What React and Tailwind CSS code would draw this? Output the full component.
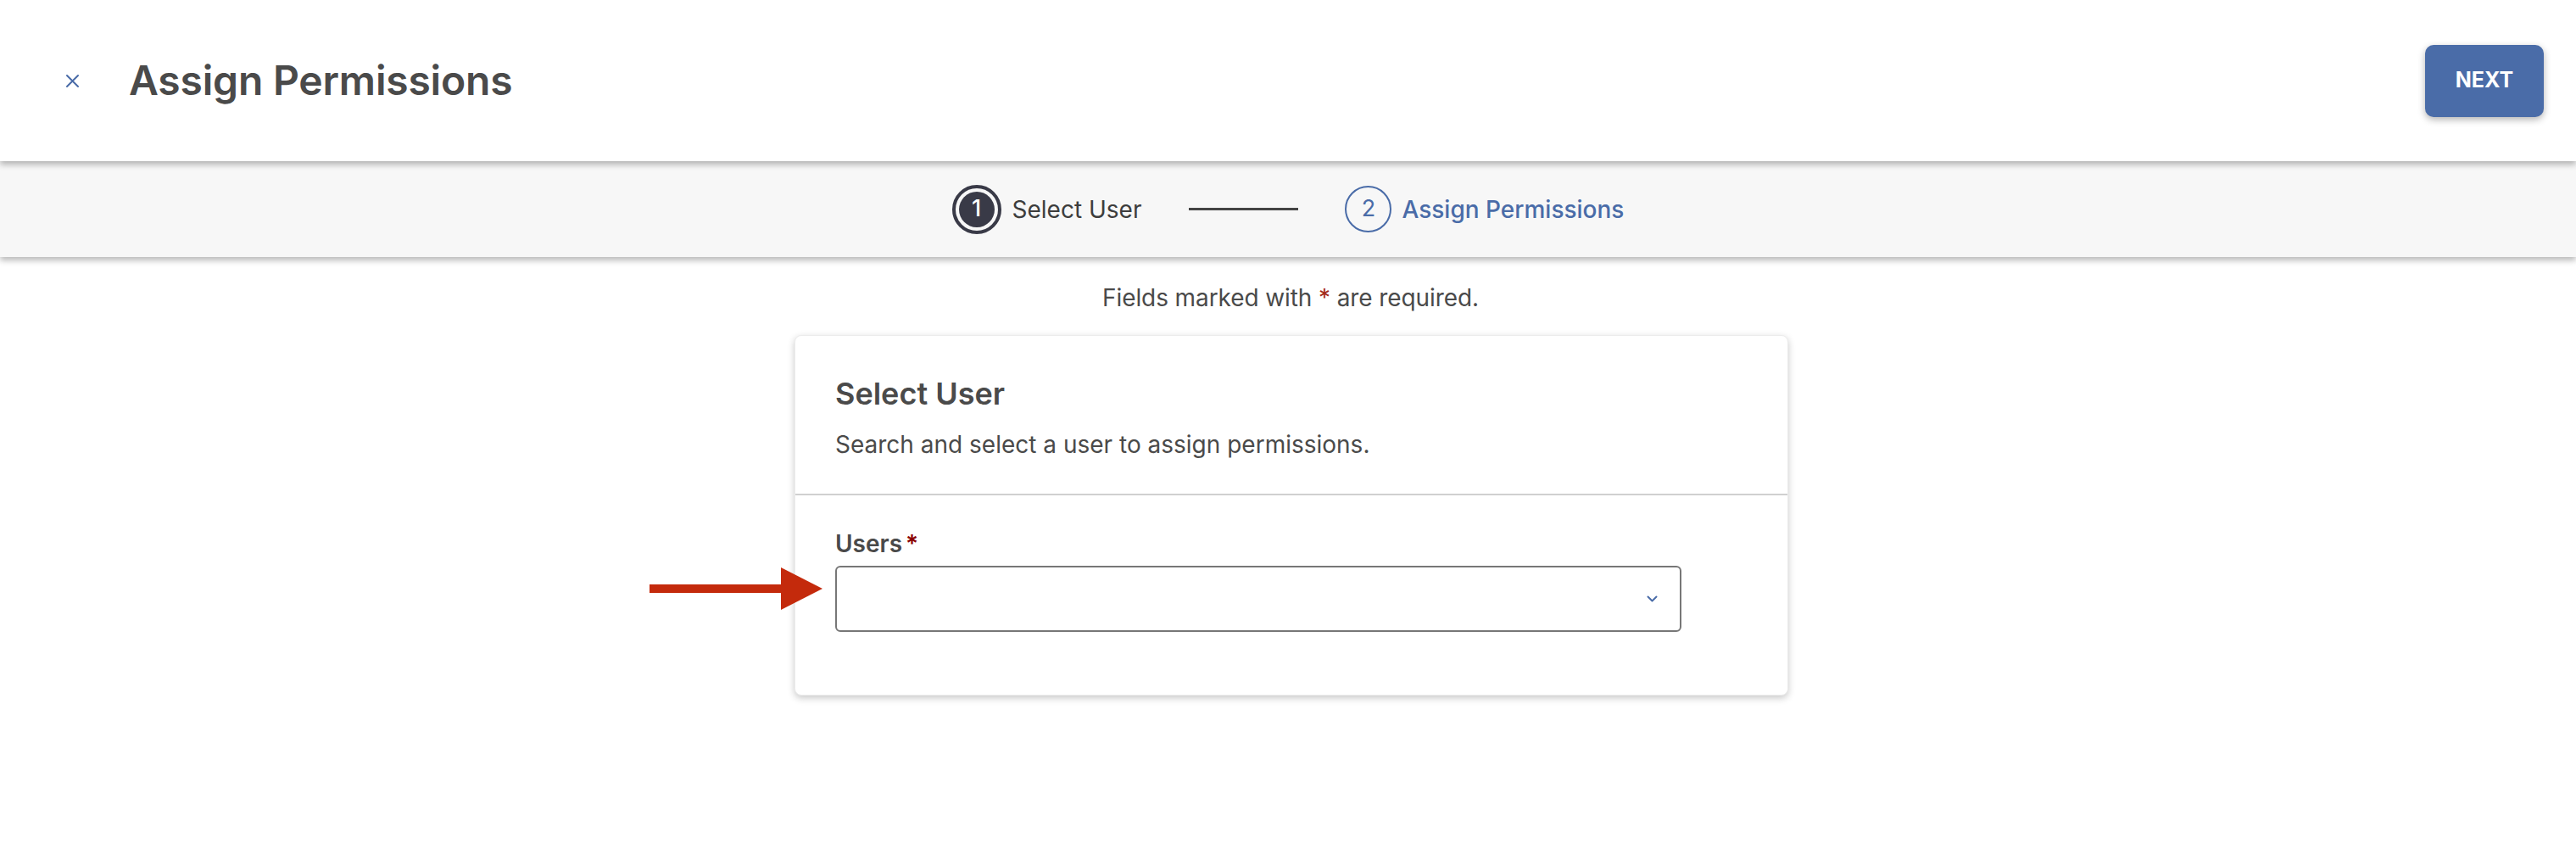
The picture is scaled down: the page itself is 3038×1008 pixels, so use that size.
export default function App() {
  return (
    <div className="min-h-screen bg-white text-[#4a4a4a] [font-family:Inter,'Noto_Sans',sans-serif]">
      {/* Header */}
      <header className="relative z-20 flex h-[190px] items-center justify-between bg-white pl-[77px] pr-[38px] shadow-[0_4px_7px_rgba(0,0,0,0.28)]">
        <div className="flex items-center gap-[58px]">
          <button className="flex h-[17px] w-[17px] items-center justify-center">
            <svg width="17" height="17" viewBox="0 0 17 17" fill="none">
              <path d="M2 2 L15 15 M15 2 L2 15" stroke="#4a6ca8" strokeWidth="2" strokeLinecap="round" />
            </svg>
          </button>
          <h1 className="text-[48px] font-semibold leading-none tracking-[-0.2px] text-[#4a4a4a]">
            Assign Permissions
          </h1>
        </div>
        <button className="flex h-[85px] w-[140px] items-center justify-center rounded-[10px] bg-[#4a6ca8] text-[25px] font-bold text-white shadow-[0_3px_8px_rgba(0,0,0,0.3)]">
          NEXT
        </button>
      </header>

      {/* Stepper */}
      <div className="relative z-10 flex h-[113px] items-center justify-center bg-[#f7f7f7] shadow-[0_4px_7px_rgba(0,0,0,0.28)]">
        <div className="flex h-[58px] w-[58px] items-center justify-center rounded-full border-4 border-[#393a47]">
          <div className="flex h-[42px] w-[42px] items-center justify-center rounded-full bg-[#393a47] text-[27px] font-medium text-white">
            1
          </div>
        </div>
        <span className="ml-[13px] text-[28px] text-[#3d3d3d]">Select User</span>
        <div className="ml-[56px] h-[3px] w-[129px] bg-[#444]" />
        <div className="ml-[55px] flex h-[55px] w-[55px] items-center justify-center rounded-full border-2 border-[#4a6ca8] text-[27px] text-[#4a6ca8]">
          2
        </div>
        <span className="ml-[12px] text-[28px] font-medium text-[#4a6ca8]">Assign Permissions</span>
      </div>

      {/* Content */}
      <main className="flex flex-col items-center">
        <p className="ml-[6px] mt-[28px] text-[28px] leading-[40px] tracking-[-0.1px] text-[#4a4a4a]">
          Fields marked with <span className="text-[#a32a1a]">*</span> are required.
        </p>

        <div className="relative ml-[8px] mt-[24px] w-[1172px] rounded-[8px] border border-[#ececec] bg-white shadow-[0_3px_8px_rgba(0,0,0,0.22)]">
          {/* Card header */}
          <div className="border-b-2 border-[#d0d0d0] px-[47px] pb-[38px] pt-[46px]">
            <h2 className="text-[36px] font-semibold leading-[44px] text-[#4a4a4a]">Select User</h2>
            <p className="mt-[18px] text-[28px] leading-[40px] text-[#4a4a4a]">
              Search and select a user to assign permissions.
            </p>
          </div>

          {/* Card body */}
          <div className="px-[47px] pb-[74px] pt-[37px]">
            <label className="block text-[28px] font-semibold leading-[40px] text-[#4a4a4a]">
              Users<span className="ml-[4px] text-[#8b0000]">*</span>
            </label>
            <div className="mt-[6px] flex h-[78px] w-[998px] items-center justify-end rounded-[6px] border-2 border-[#777] pr-[26px]">
              <svg width="13" height="8" viewBox="0 0 13 8" fill="none">
                <path d="M1.5 1.5 L6.5 6.5 L11.5 1.5" stroke="#4a6ca8" strokeWidth="2" strokeLinecap="round" strokeLinejoin="round" />
              </svg>
            </div>
          </div>

          {/* Annotation arrow */}
          <svg
            className="absolute left-[-172px] top-[273px]"
            width="204"
            height="50"
            viewBox="0 0 204 50"
          >
            <rect x="0" y="20" width="157" height="10" fill="#c42a0c" />
            <polygon points="155,0 204,25 155,50" fill="#c42a0c" />
          </svg>
        </div>
      </main>
    </div>
  );
}
